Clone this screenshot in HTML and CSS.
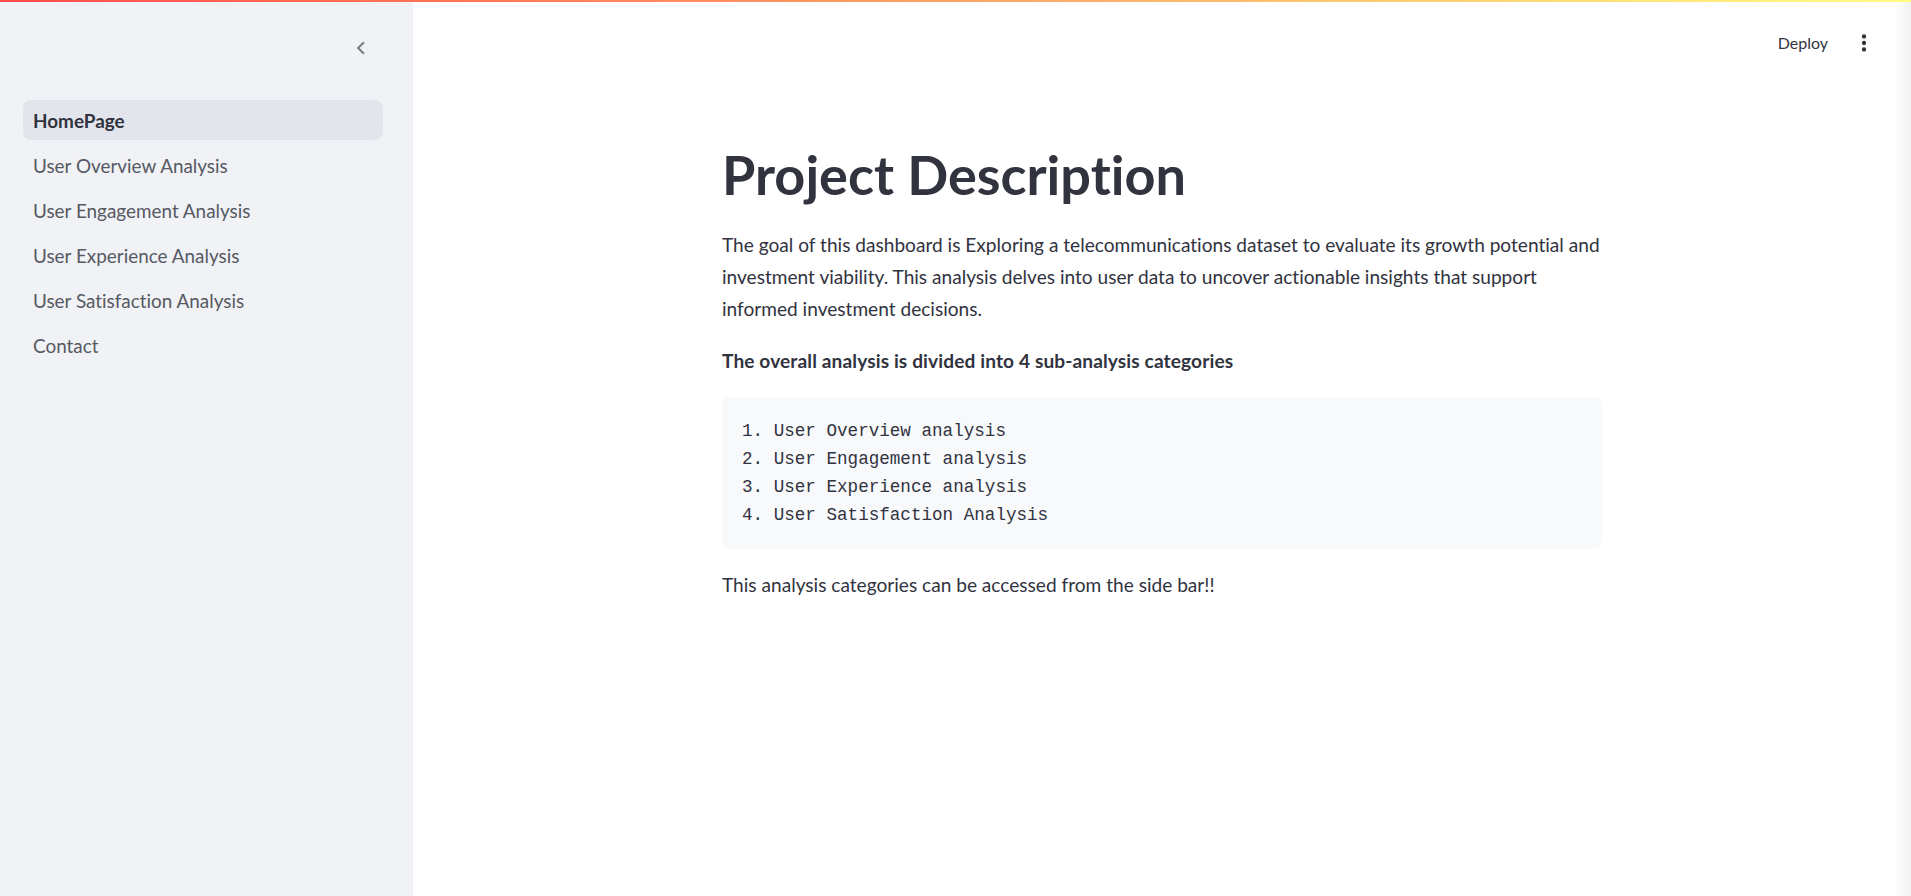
FILE: index.html
```html
<!DOCTYPE html>
<html lang="en">
<head>
<meta charset="utf-8">
<title>HomePage</title>
<link rel="stylesheet" href="styles.css">
</head>
<body>
<div class="decoration"></div>
<div class="app">
  <aside class="sidebar">
    <div class="sidebar-header">
      <button class="collapse-btn" aria-label="Collapse sidebar">
        <svg width="26" height="26" viewBox="0 0 24 24"><path d="M15.41 7.41L14 6l-6 6 6 6 1.41-1.41L10.83 12z" fill="currentColor"/></svg>
      </button>
    </div>
    <nav class="nav">
      <a class="nav-item active" href="#">HomePage</a>
      <a class="nav-item" href="#">User Overview Analysis</a>
      <a class="nav-item" href="#">User Engagement Analysis</a>
      <a class="nav-item" href="#">User Experience Analysis</a>
      <a class="nav-item" href="#">User Satisfaction Analysis</a>
      <a class="nav-item" href="#">Contact</a>
    </nav>
  </aside>
  <main class="main">
    <header class="topbar">
      <span class="deploy">Deploy</span>
      <button class="menu-btn" aria-label="Main menu">
        <svg width="26" height="26" viewBox="0 0 24 24"><circle cx="12" cy="6" r="2" fill="currentColor"/><circle cx="12" cy="12" r="2" fill="currentColor"/><circle cx="12" cy="18" r="2" fill="currentColor"/></svg>
      </button>
    </header>
    <section class="content">
      <h1 class="title">Project Description</h1>
      <p class="para">The goal of this dashboard is Exploring a telecommunications dataset to evaluate its growth potential and investment viability. This analysis delves into user data to uncover actionable insights that support informed investment decisions.</p>
      <p class="para strong">The overall analysis is divided into 4 sub-analysis categories</p>
      <pre class="code">1. User Overview analysis
2. User Engagement analysis
3. User Experience analysis
4. User Satisfaction Analysis</pre>
      <p class="para last">This analysis categories can be accessed from the side bar!!</p>
    </section>
  </main>
</div>
</body>
</html>
```
FILE: styles.css
```css
* { box-sizing: border-box; }
html, body { margin: 0; padding: 0; height: 100%; }
body {
  font-family: Lato, "Liberation Sans", sans-serif;
  font-variant-ligatures: none;
  color: #31333f;
  background: #ffffff;
  overflow: hidden;
}
.decoration {
  position: fixed;
  top: 0; left: 0; right: 0;
  height: 2px;
  background: linear-gradient(90deg, #ff4b4b, #fffd80);
  z-index: 10;
}
.app {
  display: flex;
  height: 100vh;
}
.sidebar {
  width: 413px;
  flex: 0 0 413px;
  background: #f0f2f6;
  display: flex;
  flex-direction: column;
}
.sidebar-header {
  display: flex;
  justify-content: flex-end;
  padding: 35px 39px 0 0;
  height: 100px;
}
.collapse-btn, .menu-btn {
  border: 0;
  background: transparent;
  padding: 0;
  width: 26px;
  height: 26px;
  display: flex;
  align-items: center;
  justify-content: center;
  cursor: pointer;
}
.collapse-btn { color: #7d7f8a; }
.nav {
  display: flex;
  flex-direction: column;
  gap: 5px;
  padding: 0 30px 0 23px;
}
.nav-item {
  height: 40px;
  display: flex;
  align-items: center;
  padding-left: 10px;
  border-radius: 8px;
  font-size: 18.9px;
  color: #575963;
  text-decoration: none;
}
.nav-item.active {
  background: #e2e5ec;
  color: #31333f;
  font-weight: 700;
}
.main {
  flex: 1;
  display: flex;
  flex-direction: column;
  background: linear-gradient(90deg, rgba(255,255,255,0) calc(100% - 18px), rgba(0,0,0,0.05));
}
.topbar {
  height: 86px;
  display: flex;
  align-items: center;
  justify-content: flex-end;
  padding-right: 34px;
  gap: 23px;
}
.deploy {
  font-size: 16px;
  color: #31333f;
  position: relative;
  top: -1px;
}
.menu-btn { color: #31333f; }
.content {
  width: 880px;
  margin: 0 auto;
  padding-top: 57px;
}
.title {
  margin: 0;
  font-size: 54px;
  line-height: 1.2;
  font-weight: 700;
}
.para {
  margin: 21px 0 0;
  font-size: 19.1px;
  line-height: 32px;
}
.para.strong {
  margin-top: 20.5px;
  font-weight: 700;
  letter-spacing: 0.12px;
}
.code {
  margin: 19.5px 0 0;
  background: #f8f9fb;
  border-radius: 8px;
  padding: 20px 20px;
  font-family: "Liberation Mono", "DejaVu Sans Mono", monospace;
  font-size: 17.6px;
  line-height: 28px;
  color: #31333f;
}
.para.last { margin-top: 20px; }
```
